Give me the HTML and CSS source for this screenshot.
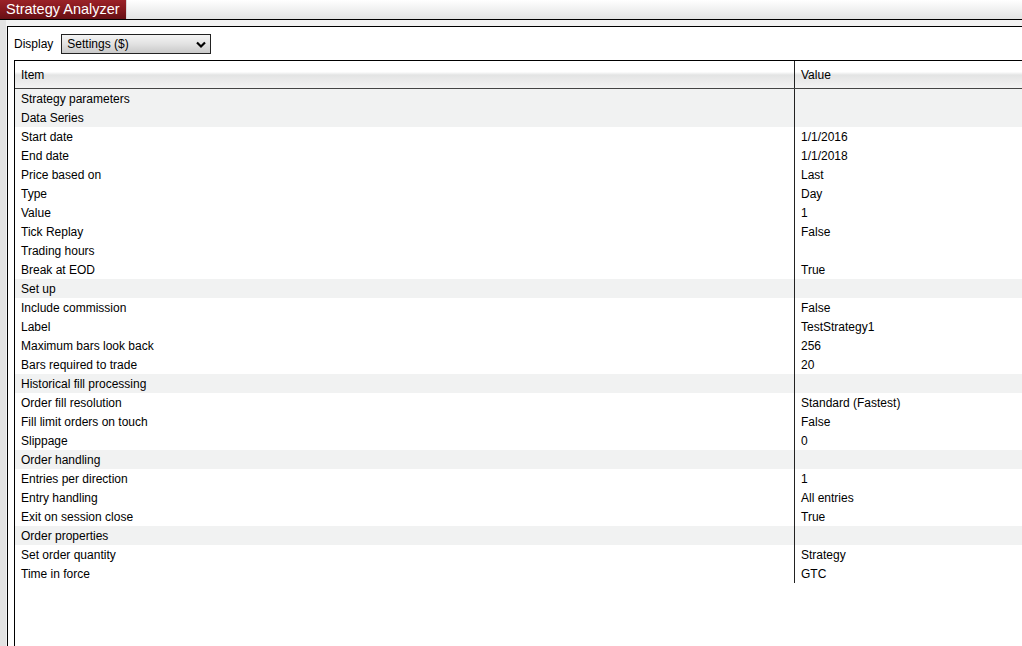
FILE: index.html
```html
<!DOCTYPE html>
<html>
<head>
<meta charset="utf-8">
<link rel="stylesheet" href="styles.css">
</head>
<body>
<div class="topbar">
  <div class="tab">Strategy Analyzer</div>
  <div class="tabfill"></div>
</div>
<div class="frame">
  <div class="panel">
    <div class="toolbar">
      <span class="label">Display</span>
      <div class="select">
        <span>Settings ($)</span>
        <svg class="chev" width="10" height="8" viewBox="0 0 10 8"><path d="M1 1.5 L5 5.5 L9 1.5" fill="none" stroke="#000" stroke-width="2.2"/></svg>
      </div>
    </div>
    <div class="grid">
      <div class="head">
        <div class="c1">Item</div>
        <div class="c2">Value</div>
      </div>
      <div class="rows">
        <div class="row group"><div class="c1">Strategy parameters</div><div class="c2"></div></div>
        <div class="row group"><div class="c1">Data Series</div><div class="c2"></div></div>
        <div class="row"><div class="c1">Start date</div><div class="c2">1/1/2016</div></div>
        <div class="row"><div class="c1">End date</div><div class="c2">1/1/2018</div></div>
        <div class="row"><div class="c1">Price based on</div><div class="c2">Last</div></div>
        <div class="row"><div class="c1">Type</div><div class="c2">Day</div></div>
        <div class="row"><div class="c1">Value</div><div class="c2">1</div></div>
        <div class="row"><div class="c1">Tick Replay</div><div class="c2">False</div></div>
        <div class="row"><div class="c1">Trading hours</div><div class="c2"></div></div>
        <div class="row"><div class="c1">Break at EOD</div><div class="c2">True</div></div>
        <div class="row group"><div class="c1">Set up</div><div class="c2"></div></div>
        <div class="row"><div class="c1">Include commission</div><div class="c2">False</div></div>
        <div class="row"><div class="c1">Label</div><div class="c2">TestStrategy1</div></div>
        <div class="row"><div class="c1">Maximum bars look back</div><div class="c2">256</div></div>
        <div class="row"><div class="c1">Bars required to trade</div><div class="c2">20</div></div>
        <div class="row group"><div class="c1">Historical fill processing</div><div class="c2"></div></div>
        <div class="row"><div class="c1">Order fill resolution</div><div class="c2">Standard (Fastest)</div></div>
        <div class="row"><div class="c1">Fill limit orders on touch</div><div class="c2">False</div></div>
        <div class="row"><div class="c1">Slippage</div><div class="c2">0</div></div>
        <div class="row group"><div class="c1">Order handling</div><div class="c2"></div></div>
        <div class="row"><div class="c1">Entries per direction</div><div class="c2">1</div></div>
        <div class="row"><div class="c1">Entry handling</div><div class="c2">All entries</div></div>
        <div class="row"><div class="c1">Exit on session close</div><div class="c2">True</div></div>
        <div class="row group"><div class="c1">Order properties</div><div class="c2"></div></div>
        <div class="row"><div class="c1">Set order quantity</div><div class="c2">Strategy</div></div>
        <div class="row"><div class="c1">Time in force</div><div class="c2">GTC</div></div>
      </div>
    </div>
  </div>
</div>
</body>
</html>
```

FILE: styles.css
```css
html, body {
  margin: 0;
  padding: 0;
  height: 100%;
  overflow: hidden;
  background: #fff;
  font-family: "Liberation Sans", Arial, sans-serif;
  font-size: 12px;
  color: #000;
}
.topbar {
  display: flex;
  height: 19px;
  border-bottom: 1px solid #000;
  background: linear-gradient(#ffffff, #e2e3e3);
}
.tab {
  width: 120px;
  padding-left: 6px;
  height: 19px;
  line-height: 18px;
  font-size: 14.5px;
  color: #fff;
  background: linear-gradient(#9a2228, #84181d 50%, #660f14);
  border-right: 1px solid #d8d8d8;
  white-space: nowrap;
}
.tabfill { flex: 1; }
.frame {
  height: calc(100% - 20px);
  box-sizing: border-box;
  padding: 6px 0 0 7px;
  background: linear-gradient(90deg, #e3e3e3 0, #e3e3e3 6px, #f2f2f2 6px, #f2f2f2 7px);
  background-color: #f4f4f4;
}
.panel {
  height: 100%;
  box-sizing: border-box;
  border-left: 1px solid #000;
  border-top: 1px solid #000;
  background: #fff;
  padding: 7px 0 0 6px;
  display: flex;
  flex-direction: column;
}
.toolbar {
  display: flex;
  align-items: center;
  gap: 8px;
  height: 20px;
}
.label { line-height: 20px; }
.select {
  width: 150px;
  height: 20px;
  box-sizing: border-box;
  border: 1px solid #222;
  background: linear-gradient(#f4f4f4, #e2e2e2 50%, #c9c9c9);
  display: flex;
  align-items: center;
  justify-content: space-between;
  padding: 0 4px 0 5px;
}
.select span { line-height: 18px; }
.chev { margin-top: 1px; }
.grid {
  margin-top: 6px;
  flex: 1;
  border-left: 1px solid #000;
  border-top: 1px solid #000;
}
.head {
  display: flex;
  height: 27px;
  border-bottom: 1px solid #444;
  background: linear-gradient(#ffffff 0%, #ffffff 40%, #e3e4e4 52%, #ebebeb 75%, #f3f3f3 100%);
}
.head .c1, .head .c2 { line-height: 28px; }
.c1 {
  width: 773px;
  padding-left: 6px;
  flex: none;
  white-space: nowrap;
}
.c2 {
  flex: 1;
  border-left: 1px solid #222;
  padding-left: 6px;
  white-space: nowrap;
}
.row {
  display: flex;
  height: 19px;
  line-height: 21px;
  overflow: hidden;
}
.row.group { background: #f1f2f2; }
```
